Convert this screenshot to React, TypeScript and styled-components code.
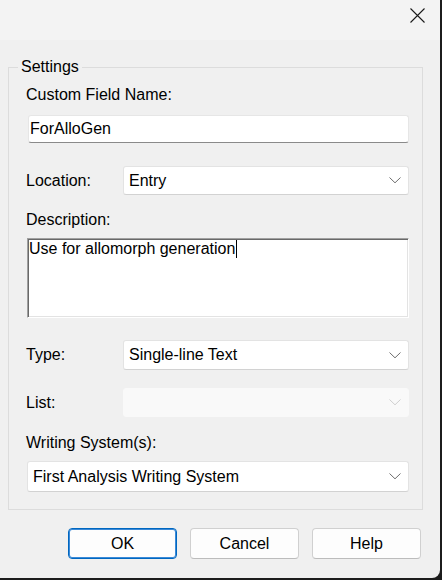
import React from 'react'
import styled, { createGlobalStyle } from 'styled-components'

const GlobalStyle = createGlobalStyle`
  html, body {
    margin: 0;
    height: 100%;
    background: #1c1c1c;
  }
  body {
    font-family: "Liberation Sans", Arial, sans-serif;
    font-size: 16px;
    color: #000;
  }
`

const Window = styled.div`
  width: 440px;
  height: 578px;
  background: #f0f0f0;
  border-bottom-right-radius: 8px;
  overflow: hidden;
  display: flex;
  flex-direction: column;
`

const TitleBar = styled.div`
  height: 40px;
  background: #f3f3f3;
  display: flex;
  justify-content: flex-end;
  align-items: flex-start;
`

const CloseButton = styled.div`
  width: 46px;
  height: 31px;
  display: flex;
  align-items: center;
  justify-content: center;
`

const Body = styled.div`
  padding: 18px 0 0 8px;
  display: flex;
  flex-direction: column;
`

const GroupBox = styled.fieldset`
  margin: 0;
  padding: 0;
  width: 415px;
  box-sizing: border-box;
  border: 1px solid #dcdcdc;
  min-inline-size: 0;
`

const Legend = styled.legend`
  margin-left: 9px;
  padding: 0 3px;
  font-size: 16px;
  line-height: 18px;
`

const GroupBody = styled.div`
  padding: 10px 13px 17px 17px;
  display: flex;
  flex-direction: column;
`

const Label = styled.div<{ $mt?: number; $width?: number }>`
  margin-top: ${p => p.$mt ?? 0}px;
  line-height: 18px;
  white-space: nowrap;
  ${p => (p.$width ? `width: ${p.$width}px; flex-shrink: 0;` : '')}
`

const TextInput = styled.div<{ $mt?: number }>`
  margin: ${p => p.$mt ?? 0}px 0 0 2px;
  height: 28px;
  box-sizing: border-box;
  background: #fff;
  border: 1px solid #e6e6e6;
  border-bottom-color: #8a8a8a;
  border-radius: 3px;
  padding: 0 1px;
  display: flex;
  align-items: center;
  line-height: 18px;
`

const Row = styled.div<{ $mt?: number }>`
  margin-top: ${p => p.$mt ?? 0}px;
  display: flex;
  align-items: center;
`

const Combo = styled.div<{ $height: number; $disabled?: boolean; $inset?: number }>`
  flex: 1;
  margin-left: ${p => p.$inset ?? 0}px;
  height: ${p => p.$height}px;
  box-sizing: border-box;
  background: ${p => (p.$disabled ? '#f9f9f9' : '#fff')};
  border: 1px solid ${p => (p.$disabled ? '#f9f9f9' : '#e3e3e3')};
  border-bottom-color: ${p => (p.$disabled ? '#f9f9f9' : '#d2d2d2')};
  border-radius: 3px;
  padding: 0 7px 0 5px;
  display: flex;
  align-items: center;
  justify-content: space-between;
  line-height: 18px;
  color: ${p => (p.$disabled ? '#a0a0a0' : '#000')};
`

const ComboText = styled.span`
  white-space: nowrap;
`

const TextArea = styled.div<{ $mt?: number }>`
  margin: ${p => p.$mt ?? 0}px 0 0 1px;
  height: 80px;
  box-sizing: border-box;
  background: #fff;
  border: 1px solid;
  border-color: #a0a0a0 #fff #fff #a0a0a0;
  box-shadow: inset 1px 1px 0 #696969, inset -1px -1px 0 #e3e3e3;
  padding: 1px 1px 0 1px;
  line-height: 18px;
`

const Caret = styled.span`
  display: inline-block;
  width: 1px;
  height: 18px;
  background: #000;
  vertical-align: top;
  margin-left: 1px;
`

const ButtonRow = styled.div`
  margin-top: 18px;
  width: 415px;
  padding-right: 2px;
  box-sizing: border-box;
  display: flex;
  justify-content: flex-end;
  gap: 13px;
`

const Button = styled.div<{ $default?: boolean }>`
  width: 109px;
  height: 31px;
  box-sizing: border-box;
  background: #fdfdfd;
  border: 1px solid ${p => (p.$default ? '#0067c0' : '#d0d0d0')};
  border-bottom-color: ${p => (p.$default ? '#0067c0' : '#bcbcbc')};
  box-shadow: ${p => (p.$default ? 'inset 0 0 0 1px #3b8ad8' : 'none')};
  border-radius: 4px;
  display: flex;
  align-items: center;
  justify-content: center;
  line-height: 18px;
`

const Chevron = ({ disabled }: { disabled?: boolean }) => (
  <svg width="12" height="7" viewBox="0 0 12 7">
    <path
      d="M0.5 0.5 L6 5.8 L11.5 0.5"
      fill="none"
      stroke={disabled ? '#cfcfcf' : '#6e6e6e'}
      strokeWidth="1"
    />
  </svg>
)

const CloseIcon = () => (
  <svg width="15" height="15" viewBox="0 0 15 15">
    <path d="M0.5 0.5 L14.5 14.5 M14.5 0.5 L0.5 14.5" stroke="#1a1a1a" strokeWidth="1.1" />
  </svg>
)

const App = () => {
  return (
    <>
      <GlobalStyle />
      <Window>
        <TitleBar>
          <CloseButton>
            <CloseIcon />
          </CloseButton>
        </TitleBar>
        <Body>
          <GroupBox>
            <Legend>Settings</Legend>
            <GroupBody>
              <Label>Custom Field Name:</Label>
              <TextInput $mt={11}>ForAlloGen</TextInput>

              <Row $mt={23}>
                <Label $width={97}>Location:</Label>
                <Combo $height={29}>
                  <ComboText>Entry</ComboText>
                  <Chevron />
                </Combo>
              </Row>

              <Label $mt={16}>Description:</Label>
              <TextArea $mt={9}>
                Use for allomorph generation
                <Caret />
              </TextArea>

              <Row $mt={22}>
                <Label $width={97}>Type:</Label>
                <Combo $height={30}>
                  <ComboText>Single-line Text</ComboText>
                  <Chevron />
                </Combo>
              </Row>

              <Row $mt={18}>
                <Label $width={97}>List:</Label>
                <Combo $height={29} $disabled>
                  <ComboText />
                  <Chevron disabled />
                </Combo>
              </Row>

              <Label $mt={17}>Writing System(s):</Label>
              <Row $mt={9}>
                <Combo $height={31} $inset={1}>
                  <ComboText>First Analysis Writing System</ComboText>
                  <Chevron />
                </Combo>
              </Row>
            </GroupBody>
          </GroupBox>

          <ButtonRow>
            <Button $default>OK</Button>
            <Button>Cancel</Button>
            <Button>Help</Button>
          </ButtonRow>
        </Body>
      </Window>
    </>
  )
}

export default App
